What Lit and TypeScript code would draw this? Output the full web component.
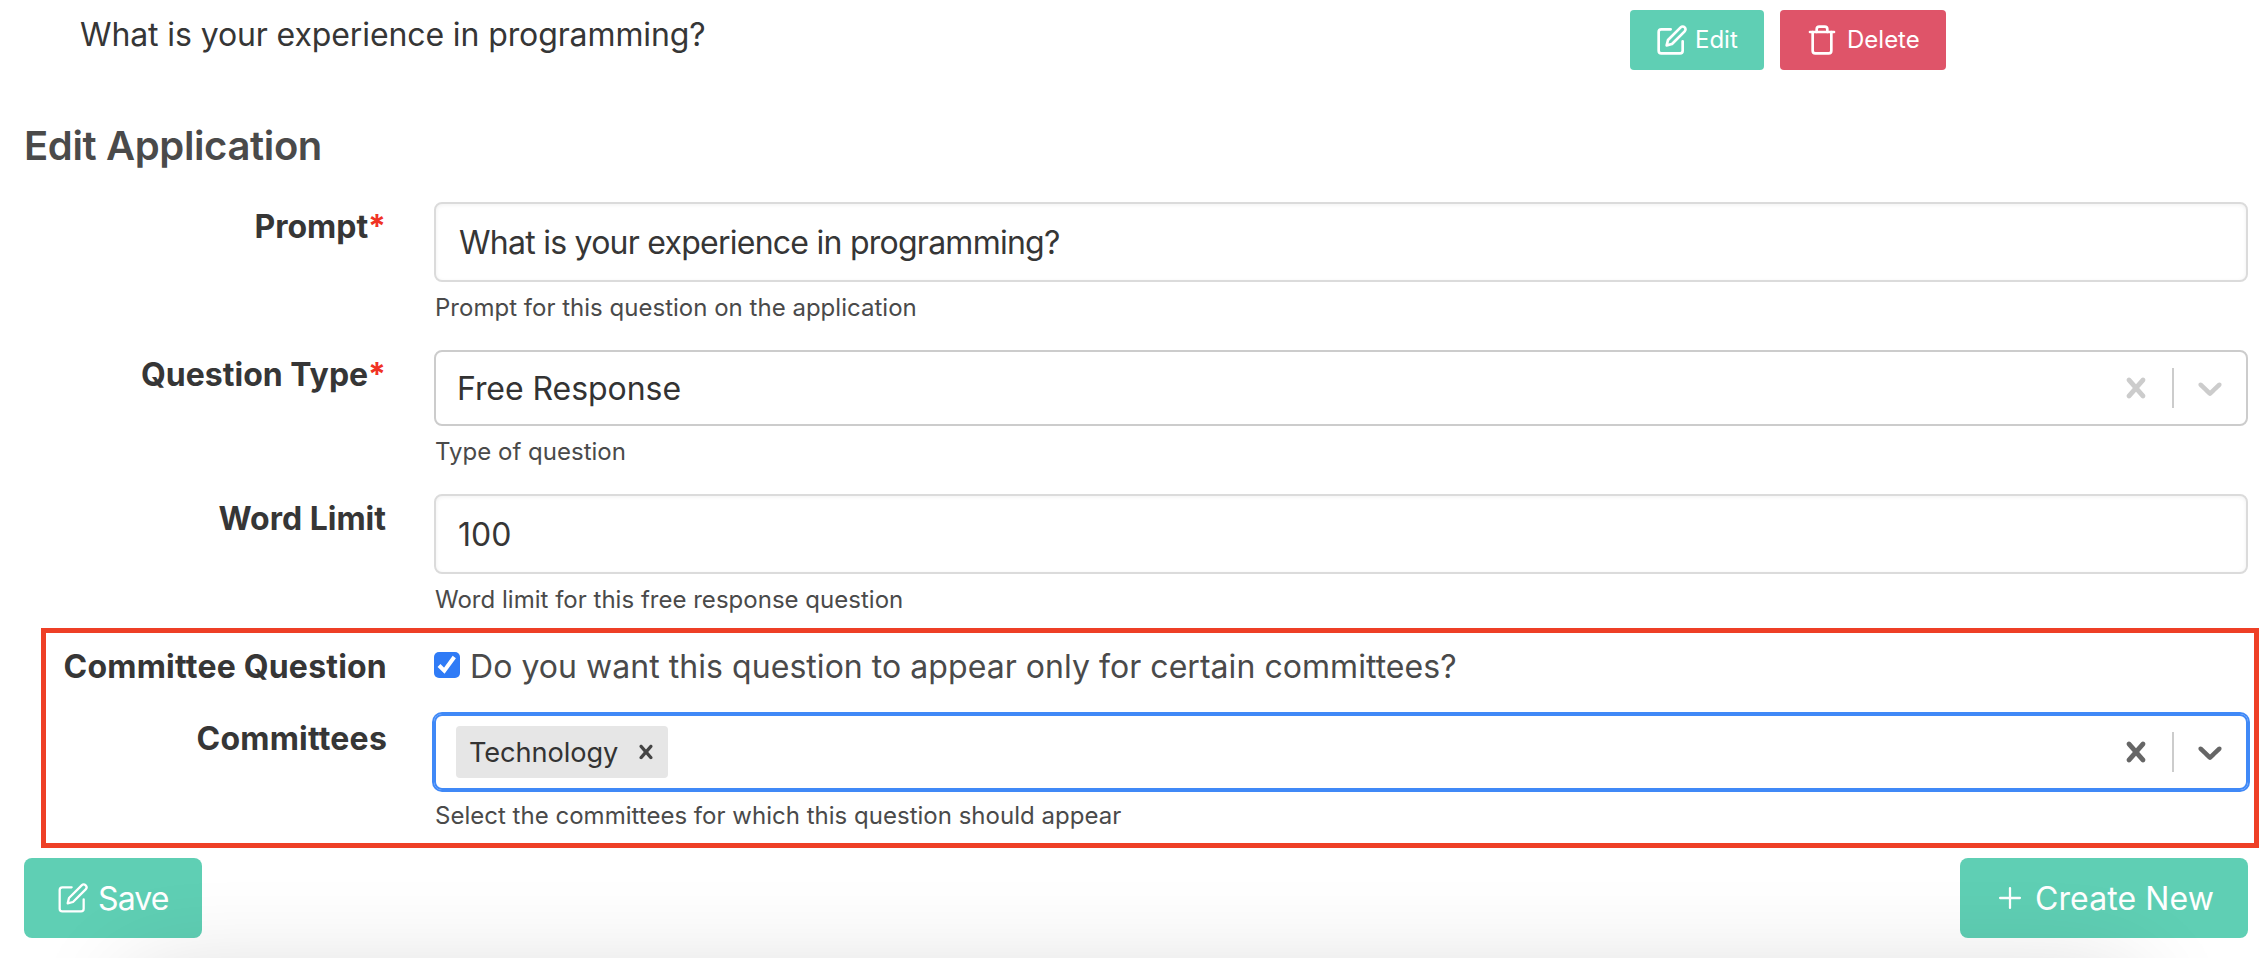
import { LitElement, html, css, svg, nothing } from "lit";
import { customElement } from "lit/decorators.js";

const editIcon = html`<svg class="ico" viewBox="0 0 24 24" fill="none" stroke="currentColor" stroke-linecap="round" stroke-linejoin="round"><path d="M11 4H4a2 2 0 0 0-2 2v14a2 2 0 0 0 2 2h14a2 2 0 0 0 2-2v-7"/><path d="M18.5 2.5a2.121 2.121 0 0 1 3 3L12 15l-4 1 1-4 9.5-9.5z"/></svg>`;
const trashIcon = html`<svg class="ico" viewBox="0 0 24 24" fill="none" stroke="currentColor" stroke-linecap="round" stroke-linejoin="round"><path d="M3 6h18"/><path d="M19 6v14a2 2 0 0 1-2 2H7a2 2 0 0 1-2-2V6m3 0V4a2 2 0 0 1 2-2h4a2 2 0 0 1 2 2v2"/></svg>`;
const plusIcon = html`<svg class="ico" viewBox="0 0 24 24" fill="none" stroke="currentColor" stroke-linecap="round"><path d="M12 5v14M5 12h14"/></svg>`;
const crossPath = svg`<path d="M14.348 14.849c-0.469 0.469-1.229 0.469-1.697 0l-2.651-3.030-2.651 3.029c-0.469 0.469-1.229 0.469-1.697 0-0.469-0.469-0.469-1.229 0-1.697l2.758-3.15-2.759-3.152c-0.469-0.469-0.469-1.228 0-1.697s1.228-0.469 1.697 0l2.652 3.031 2.651-3.031c0.469-0.469 1.228-0.469 1.697 0s0.469 1.229 0 1.697l-2.758 3.152 2.758 3.15c0.469 0.469 0.469 1.229 0 1.698z"/>`;
const chevronPath = svg`<path d="M4.516 7.548c0.436-0.446 1.043-0.481 1.576 0l3.908 3.747 3.908-3.747c0.533-0.481 1.141-0.446 1.574 0 0.436 0.445 0.408 1.197 0 1.615-0.406 0.418-4.695 4.502-4.695 4.502-0.217 0.223-0.502 0.335-0.787 0.335s-0.57-0.112-0.789-0.335c0 0-4.287-4.084-4.695-4.502s-0.436-1.17 0-1.615z"/>`;

@customElement("app-root")
export class AppRoot extends LitElement {
  static styles = css`
    :host {
      display: block; position: relative; box-sizing: border-box; width: 2264px; height: 958px;
      overflow: hidden; background: #fff; padding: 10px 16px 0 24px;
      font: 32px/48px Inter, "Liberation Sans", sans-serif; color: #4a4a4a;
    }
    * { box-sizing: border-box; }
    .question { display: flex; height: 60px; padding-left: 56px; color: #363636; }
    .title { width: 1550px; padding-top: 1px; letter-spacing: -0.11px; }
    .buttons { display: flex; gap: 16px; }
    .btn { display: flex; align-items: center; border: 0; color: #fff; background: #5fcfb4; font: inherit; padding: 0; white-space: nowrap; }
    .small { height: 60px; border-radius: 4px; font-size: 24px; line-height: 36px; }
    .ico { display: block; flex: none; stroke-width: 2; }
    .edit { width: 134px; padding-left: 26px; }
    .edit .ico { width: 32px; margin-right: 7px; }
    .delete { width: 166px; padding-left: 26px; background: #df5469; }
    .delete .ico { width: 32px; margin-right: 9px; }
    .large { height: 80px; border-radius: 8px; padding-top: 2px; }
    .large .ico { margin-top: -2px; }
    .save { width: 178px; padding-left: 33px; letter-spacing: -0.9px; }
    .save .ico { width: 32px; margin-right: 9px; stroke-width: 1.7; }
    .create { width: 288px; padding-left: 33px; letter-spacing: 0.1px; }
    .create .ico { width: 34px; margin-right: 8px; stroke-width: 1.6; }
    h2 { margin: 53px 0 34px; height: 45px; font-size: 40px; line-height: 45px; font-weight: 600; letter-spacing: -0.37px; }
    .field { display: grid; grid-template-columns: 362px 1814px; column-gap: 48px; margin-bottom: 24px; }
    .label { padding-top: 1px; margin-bottom: -1px; text-align: right; font-weight: 700; color: #363636; white-space: nowrap; }
    .label.wide { letter-spacing: 0.2px; margin-right: -1px; }
    .star { color: #f03224; }
    .input { height: 80px; border: 2px solid #dbdbdb; border-radius: 8px; padding: 15px 22px 0; color: #363636; box-shadow: inset 0 1px 4px rgba(10,10,10,.06); }
    .tight { letter-spacing: -0.75px; padding-left: 1px; }
    .select { display: flex; align-items: center; height: 76px; border: 2px solid #ccc; border-radius: 8px; padding-left: 20px; color: #333; }
    .focused { border-color: #4089f7; box-shadow: 0 0 0 2px #4089f7; }
    .value { flex: 1; display: flex; }
    .plain { padding: 2px 0 0 1px; letter-spacing: -0.05px; }
    .indicators { display: flex; align-items: center; color: #ccc; }
    .focused .indicators { color: #666; }
    .indicators svg { width: 40px; height: 40px; margin: 0 16px; fill: currentColor; display: block; }
    .rule { width: 2px; height: 40px; background: #ccc; }
    .chip { display: flex; align-items: center; width: 212px; height: 52px; border-radius: 4px; background: #e6e6e6; font-size: 27.2px; line-height: 33px; padding: 0 8px 0 13px; justify-content: space-between; letter-spacing: -0.08px; }
    .chip svg { width: 28px; height: 28px; fill: #444; }
    .help { padding: 8px 0 0 1px; font-size: 24px; line-height: 36px; letter-spacing: 0.015px; }
    .check { display: flex; }
    .check span { padding-top: 1px; margin-bottom: -1px; letter-spacing: 0.045px; }
    .box { width: 26px; height: 26px; margin: 10px 10px 0 0; display: block; border-radius: 5px; background: #2f7bf6; }
    .footer { display: flex; justify-content: space-between; }
    .outline { position: absolute; left: 41px; top: 628px; width: 2218px; height: 220px; border: 5px solid #ee3f26; }
    .shade { position: absolute; left: 130px; top: 976px; width: 2004px; height: 300px; box-shadow: 0 0 100px rgba(0,0,0,.16); pointer-events: none; }
  `;

  private field(label: string, required: boolean, body: unknown, help?: string) {
    return html`<div class="field">
      <div class="label ${label.startsWith("Committee") ? "wide" : ""}"><span>${label}</span>${required ? html`<span class="star">*</span>` : nothing}</div>
      <div>${body}${help ? html`<div class="help"><span>${help}</span></div>` : nothing}</div>
    </div>`;
  }

  private select(value: unknown, focused = false) {
    return html`<div class="select ${focused ? "focused" : ""}">
      <div class="value">${value}</div>
      <div class="indicators">
        <svg viewBox="0 0 20 20">${crossPath}</svg><span class="rule"></span><svg viewBox="0 0 20 20">${chevronPath}</svg>
      </div>
    </div>`;
  }

  render() {
    return html`
      <div class="question">
        <div class="title"><span>What is your experience in programming?</span></div>
        <div class="buttons">
          <button class="btn small edit">${editIcon}<span>Edit</span></button>
          <button class="btn small delete">${trashIcon}<span>Delete</span></button>
        </div>
      </div>
      <h2><span>Edit Application</span></h2>
      ${this.field("Prompt", true, html`<div class="input"><span class="tight">What is your experience in programming?</span></div>`, "Prompt for this question on the application")}
      ${this.field("Question Type", true, this.select(html`<span class="plain">Free Response</span>`), "Type of question")}
      ${this.field("Word Limit", false, html`<div class="input"><span>100</span></div>`, "Word limit for this free response question")}
      ${this.field("Committee Question", false, html`<div class="check">
        <svg class="box" viewBox="0 0 26 26"><path d="M5 13.5 L10.3 18.7 L20.3 5" fill="none" stroke="#fff" stroke-width="4"/></svg>
        <span>Do you want this question to appear only for certain committees?</span></div>`)}
      ${this.field("Committees", false, this.select(html`<div class="chip"><span>Technology</span><svg viewBox="0 0 20 20">${crossPath}</svg></div>`, true), "Select the committees for which this question should appear")}
      <div class="footer">
        <button class="btn large save">${editIcon}<span>Save</span></button>
        <button class="btn large create">${plusIcon}<span>Create New</span></button>
      </div>
      <div class="outline"></div>
      <div class="shade"></div>
    `;
  }
}
